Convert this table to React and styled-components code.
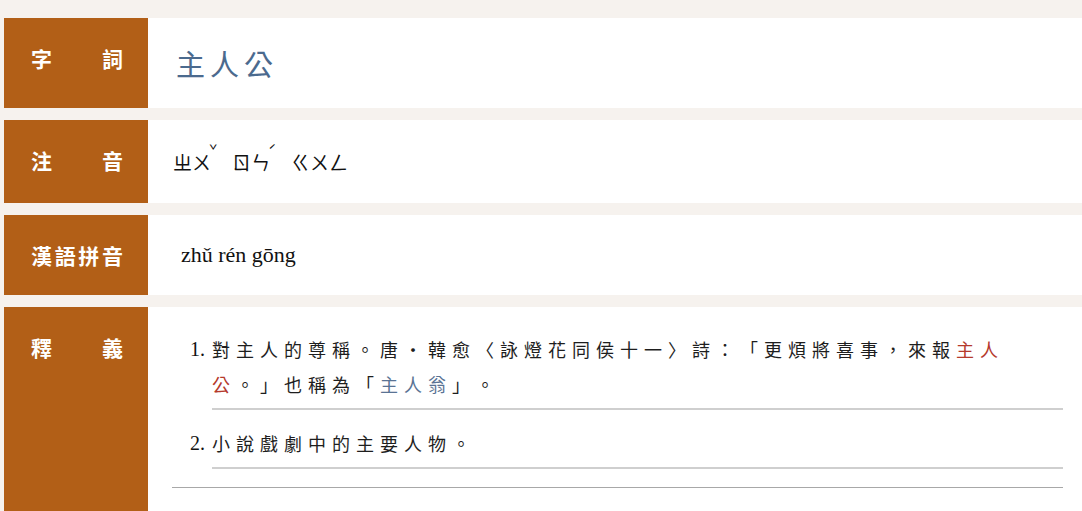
import styled, { createGlobalStyle } from "styled-components";

const GlobalStyle = createGlobalStyle`
  html, body {
    margin: 0;
    padding: 0;
    background: #f6f2ee;
  }
  body {
    font-family: "Noto Sans CJK TC", "Noto Sans", sans-serif;
    color: #1e1e1e;
    text-spacing-trim: space-all;
  }
`;

const Page = styled.div`
  padding: 18px 0 0 4px;
  display: flex;
  flex-direction: column;
  gap: 12px;
`;

const Row = styled.div`
  display: flex;
  align-items: stretch;
`;

const Label = styled.div`
  flex: 0 0 144px;
  box-sizing: border-box;
  padding: 28px 25px 0 27px;
  background: #b25f17;
  color: #fff;
  font-size: 21px;
  font-weight: 700;
  line-height: 24px;
  display: flex;
  align-items: flex-start;
`;

const LabelChars = styled.div`
  flex: 1;
  display: flex;
  justify-content: space-between;
`;

const Content = styled.div`
  flex: 1;
  background: #fff;
  box-sizing: border-box;
  padding: ${(p) => p.$pad || "0"};
  padding-right: 19px;
`;

const Word = styled.div`
  font-size: 29px;
  line-height: 34px;
  letter-spacing: 5px;
  color: #4b6a8e;
  padding-left: 4px;
`;

const Zhuyin = styled.div`
  font-size: 19px;
  line-height: 23px;
  color: #111;
  display: flex;
`;

const Syllable = styled.span`
  display: inline-flex;
  align-items: flex-start;
  margin-right: 14px;
`;

const Tone = styled.span`
  font-size: 14px;
  line-height: 12px;
  width: 9px;
  margin-top: -6px;
  margin-left: -2px;
`;

const Pinyin = styled.div`
  font-family: "Liberation Serif", "Times New Roman", serif;
  font-size: 22px;
  line-height: 24px;
  color: #111;
  padding-left: 9px;
`;

const List = styled.ol`
  list-style: none;
  margin: 0;
  padding: 0;
  display: flex;
  flex-direction: column;
  gap: 16px;
`;

const Item = styled.li`
  display: flex;
  align-items: flex-start;
`;

const Num = styled.span`
  flex: 0 0 40px;
  box-sizing: border-box;
  padding-right: 7px;
  text-align: right;
  font-family: "Liberation Serif", "Times New Roman", serif;
  font-size: 20px;
  line-height: 35px;
  color: #111;
`;

const Body = styled.div`
  flex: 1;
  font-size: 18px;
  line-height: 35px;
  letter-spacing: 6px;
  color: #1e1e1e;
  padding-bottom: 6px;
  border-bottom: 2px solid #cfcfcf;
  text-spacing-trim: space-all;
`;

const Hl = styled.span`
  color: ${(p) => (p.$tone === "link" ? "#5a7394" : "#b53a2c")};
`;

const Rule = styled.hr`
  margin: 18px 0 0;
  border: none;
  border-top: 1px solid #a8a8a8;
`;

const LabelText = ({ text }) => (
  <LabelChars>
    {text.split("").map((c, i) => (
      <span key={i}>{c}</span>
    ))}
  </LabelChars>
);

const zhuyin = [
  { s: "ㄓㄨ", t: "ˇ" },
  { s: "ㄖㄣ", t: "ˊ" },
  { s: "ㄍㄨㄥ", t: "" },
];

export default function App() {
  return (
    <>
      <GlobalStyle />
      <Page>
        <Row>
          <Label>
            <LabelText text="字詞" />
          </Label>
          <Content $pad="28px 0 28px 24px">
            <Word>主人公</Word>
          </Content>
        </Row>
        <Row>
          <Label>
            <LabelText text="注音" />
          </Label>
          <Content $pad="30px 0 30px 25px">
            <Zhuyin>
              {zhuyin.map((z, i) => (
                <Syllable key={i}>
                  {z.s}
                  {z.t && <Tone>{z.t}</Tone>}
                </Syllable>
              ))}
            </Zhuyin>
          </Content>
        </Row>
        <Row>
          <Label>
            <LabelText text="漢語拼音" />
          </Label>
          <Content $pad="28px 0 28px 24px">
            <Pinyin>zhǔ rén gōng</Pinyin>
          </Content>
        </Row>
        <Row>
          <Label>
            <LabelText text="釋義" />
          </Label>
          <Content $pad="25px 0 40px 24px">
            <List>
              <Item>
                <Num>1.</Num>
                <Body>
                  對主人的尊稱。唐・韓愈〈詠燈花同侯十一〉詩：「更煩將喜事，來報
                  <Hl>主人公</Hl>。」也稱為「<Hl $tone="link">主人翁</Hl>」。
                </Body>
              </Item>
              <Item>
                <Num>2.</Num>
                <Body>小說戲劇中的主要人物。</Body>
              </Item>
            </List>
            <Rule />
          </Content>
        </Row>
      </Page>
    </>
  );
}
